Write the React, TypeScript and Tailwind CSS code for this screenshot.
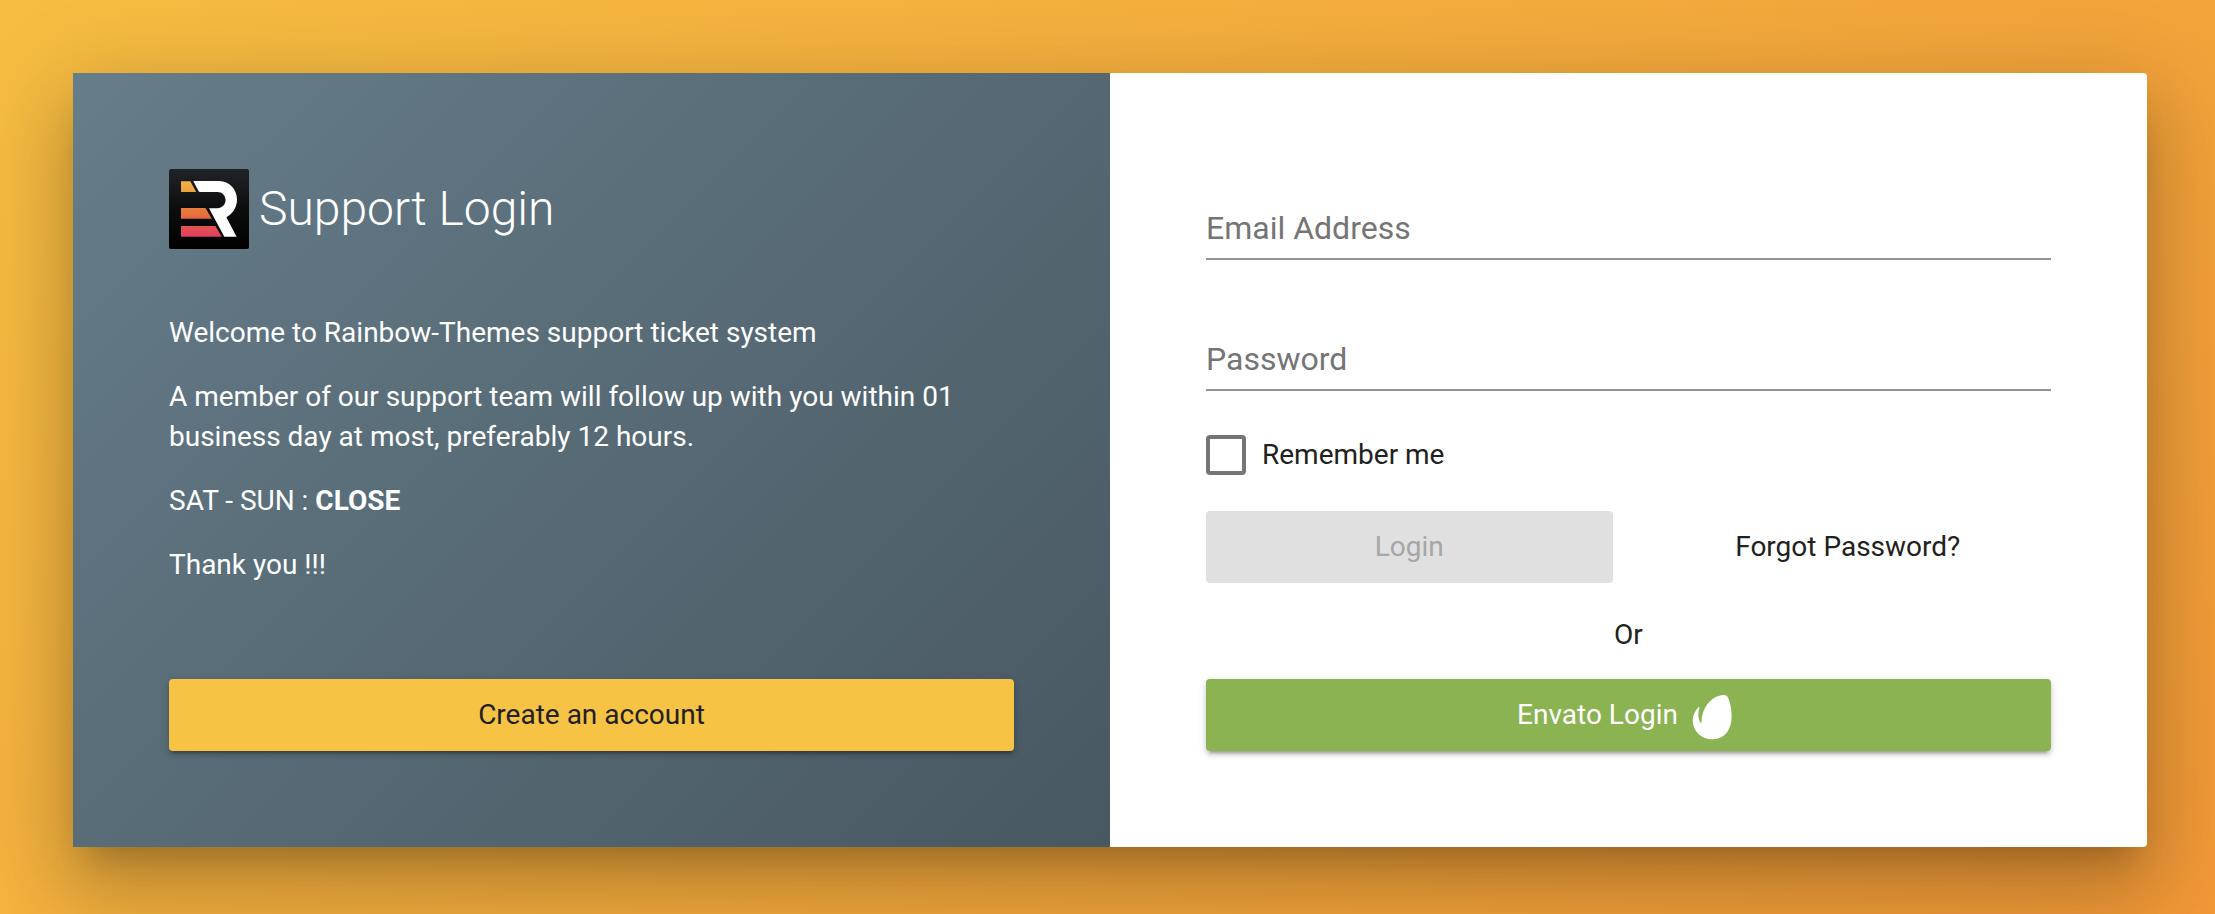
import { useState } from "react";

function BrandLogo() {
  return (
    <svg viewBox="0 0 80 80" className="size-20 shrink-0 rounded-xs" aria-hidden="true">
      <defs>
        <linearGradient id="tile" x1="0" y1="0" x2="0" y2="1">
          <stop offset="0" stopColor="#202326" />
          <stop offset="0.5" stopColor="#0c0d0e" />
          <stop offset="1" stopColor="#000000" />
        </linearGradient>
        <linearGradient id="bars" gradientUnits="userSpaceOnUse" x1="0" y1="12" x2="0" y2="68">
          <stop offset="0" stopColor="#f2b545" />
          <stop offset="0.5" stopColor="#e87c3c" />
          <stop offset="0.7" stopColor="#e3623f" />
          <stop offset="1" stopColor="#e23b64" />
        </linearGradient>
      </defs>
      <rect width="80" height="80" fill="url(#tile)" />
      <path fill="url(#bars)" d="M12 12.3h9.3L27.2 23H12zM12 39h24.500l6.300 10.700H12zM12 57h34.500l6.300 10.800H12z" />
      <path
        fill="#fff"
        d="M24.300 12H50c10.500 0 18 8.500 18 18.500 0 8-4.500 14.500-10.600 17.700L67.600 67.800H55.300L40 39.200h8.500c4.500 0 8-3.500 8-8.200s-3.500-8-8-8H31c-.8 0-1.200-.3-1.500-.9z"
      />
    </svg>
  );
}

function EnvatoLeaf() {
  return (
    <svg viewBox="0 0 40 46" className="mt-1 h-[46px] w-10 shrink-0" aria-hidden="true">
      <path
        fill="#fff"
        d="M34.300 1.600c-2-1.400-8-.6-13.300 3.200C14 9.800 9.800 18 9.500 28.300c0 .9-1 1-1.300.3-2-4.600-2.500-9.500-.8-14.400.4-1.100-.5-1.600-1.300-.7C2.900 17.200.7 21.500.7 26.200.8 37.500 9.500 45.300 20.200 45.300c12 0 18.200-8.500 19.200-19.300.9-9.900-1.900-22.100-5.100-24.400z"
      />
    </svg>
  );
}

const buttonBase =
  "flex h-[72px] w-full items-center justify-center rounded-sm text-[28px] leading-10";
const raised =
  "shadow-[0_6px_2px_-4px_rgba(0,0,0,0.2),0_4px_4px_0_rgba(0,0,0,0.14),0_2px_10px_0_rgba(0,0,0,0.12)]";
const field =
  "block w-full border-b-2 border-[#949494] bg-transparent pb-[10px] text-[32px] leading-10 h-[52px] text-[#212121] outline-none placeholder:text-[#757575] placeholder:opacity-100 focus:border-[#f6c344]";

export default function App() {
  const [email, setEmail] = useState("");
  const [password, setPassword] = useState("");
  const ready = email !== "" && password !== "";

  return (
    <main className="flex min-h-screen bg-linear-135 from-[#f6bd42] to-[#f19937] pt-[73px] pr-[68px] pb-[67px] pl-[73px] font-['Roboto',sans-serif] text-[28px] leading-10">
      <div className="grid w-full grid-cols-2 rounded-sm bg-white shadow-[0_22px_30px_-14px_rgba(0,0,0,0.2),0_48px_76px_6px_rgba(0,0,0,0.14),0_18px_92px_16px_rgba(0,0,0,0.12)]">
        <section className="flex flex-col bg-linear-135 from-[#667d8a] to-[#485861] p-24 text-white">
          <header className="flex items-center gap-[10px]">
            <BrandLogo />
            <h1 className="text-5xl font-light">Support Login</h1>
          </header>
          <div className="mt-16 flex flex-col gap-6">
            <p>Welcome to Rainbow-Themes support ticket system</p>
            <p>
              A member of our support team will follow up with you within 01 business day at most,
              preferably 12 hours.
            </p>
            <p>
              SAT - SUN : <strong className="font-bold">CLOSE</strong>
            </p>
            <p>Thank you !!!</p>
          </div>
          <button type="button" className={`${buttonBase} ${raised} mt-auto bg-[#f6c344] text-[#212121]`}>
            Create an account
          </button>
        </section>

        <form
          className="flex flex-col px-24 pt-[135px] pb-24 text-[#212121]"
          onSubmit={(event) => event.preventDefault()}
        >
          <input
            type="email"
            aria-label="Email Address"
            placeholder="Email Address"
            className={field}
            value={email}
            onChange={(event) => setEmail(event.target.value)}
          />
          <input
            type="password"
            aria-label="Password"
            placeholder="Password"
            className={`${field} mt-[79px]`}
            value={password}
            onChange={(event) => setPassword(event.target.value)}
          />
          <label className="mt-11 flex items-center gap-4 self-start">
            <input
              type="checkbox"
              className="size-10 appearance-none rounded-sm border-4 border-[#757575] checked:bg-[#f6c344]"
            />
            Remember me
          </label>
          <div className="mt-9 grid grid-cols-2 gap-8">
            <button
              type="submit"
              disabled={!ready}
              className={`${buttonBase} bg-[#f6c344] disabled:bg-[#e0e0e0] disabled:text-[#a6a6a6]`}
            >
              Login
            </button>
            <a href="#forgot-password" className={buttonBase}>
              Forgot Password?
            </a>
          </div>
          <p className="mt-8 mb-6 text-center">Or</p>
          <button
            type="button"
            className={`${buttonBase} ${raised} gap-[14px] bg-[#8bb352] pr-2 text-white`}
          >
            Envato Login
            <EnvatoLeaf />
          </button>
        </form>
      </div>
    </main>
  );
}
